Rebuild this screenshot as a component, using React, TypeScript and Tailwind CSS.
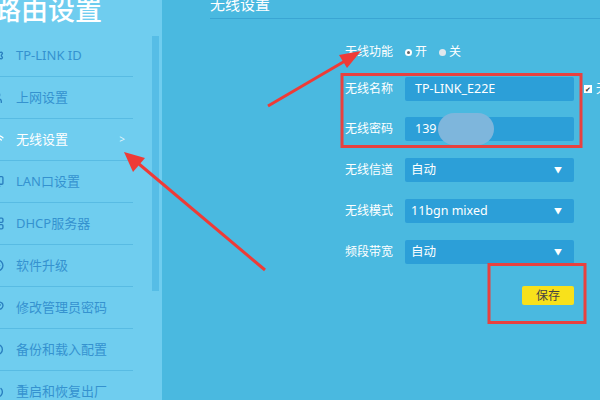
import { Settings, User, Wifi, Monitor, Server, ArrowUpCircle, KeyRound, RotateCcw, Power } from 'lucide-react'

const font = { fontFamily: '"Noto Sans", "Noto Sans CJK SC", sans-serif' }

const menu = [
  { label: 'TP-LINK ID', icon: Settings },
  { label: '上网设置', icon: User },
  { label: '无线设置', icon: Wifi, active: true },
  { label: 'LAN口设置', icon: Monitor },
  { label: 'DHCP服务器', icon: Server },
  { label: '软件升级', icon: ArrowUpCircle },
  { label: '修改管理员密码', icon: KeyRound },
  { label: '备份和载入配置', icon: RotateCcw },
  { label: '重启和恢复出厂', icon: Power },
]

function SelectRow({ label, value }: { label: string; value: string }) {
  return (
    <div className="flex h-[24px] items-center">
      <span className="w-[60px] text-[12px] text-white">{label}</span>
      <div className="flex h-[24px] w-[169px] items-center justify-between rounded-[2px] bg-[#2c9fd8] pl-[6px] pr-[12px] text-[12.5px] text-white">
        <span>{value}</span>
        <span className="text-[8px]">▼</span>
      </div>
    </div>
  )
}

export default function App() {
  return (
    <div className="relative flex h-[400px] w-[600px] overflow-hidden bg-[#4ab9e0]" style={font}>
      <aside className="relative w-[162px] shrink-0 bg-[#6fcdef]">
        <div className="-ml-[6px] -mt-[10px] h-[45px] whitespace-nowrap text-[27px] font-medium leading-[40px] text-white">
          路由设置
        </div>
        <ul className="w-[133px]">
          {menu.map((m) => {
            const Icon = m.icon
            return (
              <li
                key={m.label}
                className="flex h-[42px] items-center border-b border-[#58bbe3] pr-[8px]"
              >
                <Icon
                  size={13}
                  strokeWidth={2.5}
                  className={`-ml-[9px] mr-[12px] shrink-0 ${m.active ? 'text-white' : 'text-[#2a7fbf]'}`}
                />
                <span
                  className={`flex-1 whitespace-nowrap text-[13px] ${m.active ? 'text-white' : 'text-[#3592cf]'}`}
                >
                  {m.label}
                </span>
                {m.active && <span className="text-[10px] text-[#dff3fb]">&gt;</span>}
              </li>
            )
          })}
        </ul>
        <div className="absolute left-[152px] top-[36px] h-[255px] w-[7px] bg-[#56bde6]" />
      </aside>

      <main className="flex-1 pl-[48px]">
        <div className="-mt-[6px] whitespace-nowrap border-b border-[#3aa5d3] pb-[4px] text-[15px] leading-[20px] text-white">
          无线设置
        </div>
        <div className="ml-[135px] mt-[23px] flex flex-col">
          <div className="flex h-[20px] items-center whitespace-nowrap text-[12px] text-white">
            <span className="w-[60px]">无线功能</span>
            <span className="mr-[3px] flex h-[7px] w-[7px] items-center justify-center rounded-full bg-white">
              <span className="h-[3px] w-[3px] rounded-full bg-[#666]" />
            </span>
            <span className="mr-[12px]">开</span>
            <span className="mr-[3px] h-[7px] w-[7px] rounded-full bg-[#dfe7ec]" />
            <span>关</span>
          </div>

          <div className="mt-[15px] flex h-[24px] items-center whitespace-nowrap">
            <span className="w-[60px] text-[12px] text-white">无线名称</span>
            <div className="flex h-[24px] w-[169px] shrink-0 items-center rounded-[2px] bg-[#2c9fd8] pl-[10px] text-[12.5px] text-white">
              TP-LINK_E22E
            </div>
            <span className="ml-[10px] flex h-[8px] w-[8px] shrink-0 items-center justify-center bg-white text-[7px] leading-none text-[#333]">
              ✔
            </span>
            <span className="ml-[4px] text-[12px] text-white">无线</span>
          </div>

          <div className="mt-[16px] flex h-[24px] items-center">
            <span className="w-[60px] text-[12px] text-white">无线密码</span>
            <div className="relative flex h-[24px] w-[169px] items-center rounded-[2px] bg-[#2c9fd8] pl-[10px] text-[12.5px] text-white">
              139
              <span className="absolute left-[33px] top-[-4px] h-[32px] w-[56px] rounded-full bg-[#7eb6dc]" />
            </div>
          </div>

          <div className="mt-[17px] flex flex-col gap-[17px]">
            <SelectRow label="无线信道" value="自动" />
            <SelectRow label="无线模式" value="11bgn mixed" />
            <SelectRow label="频段带宽" value="自动" />
          </div>

          <div className="mt-[22px] flex w-[229px] justify-end">
            <button className="h-[19px] w-[52px] rounded-[2px] bg-[#f8e11b] text-[12px] leading-[19px] text-[#444]">
              保存
            </button>
          </div>
        </div>
      </main>

      <svg className="pointer-events-none absolute left-0 top-0" width="600" height="400">
        <rect x="342" y="74.5" width="239" height="72" fill="none" stroke="#e8413f" strokeWidth="3" />
        <rect x="489" y="264.5" width="96" height="58" fill="none" stroke="#e8413f" strokeWidth="3" />
        <line x1="268" y1="106" x2="345" y2="61" stroke="#ee3b37" strokeWidth="3" />
        <polygon points="361,51 339,55 347,68" fill="#ee3b37" />
        <line x1="265" y1="270" x2="139" y2="164" stroke="#ee3b37" strokeWidth="3" />
        <polygon points="124,152 133,172 145,158" fill="#ee3b37" />
      </svg>
    </div>
  )
}
